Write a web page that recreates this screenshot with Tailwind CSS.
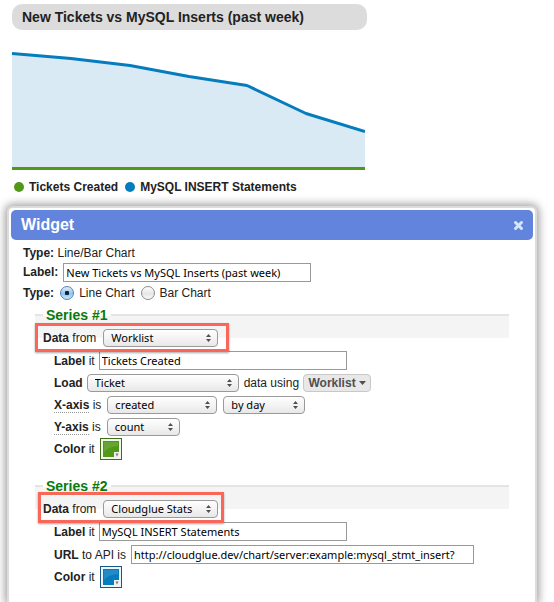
<!DOCTYPE html>
<html lang="en">
<head>
<meta charset="utf-8">
<title>Widget</title>
<script src="https://cdn.jsdelivr.net/npm/@tailwindcss/browser@4"></script>
</head>
<body class="flex min-h-screen flex-col bg-white font-['Liberation_Sans',Arial,sans-serif] text-xs text-[#222]">
<svg class="hidden">
  <symbol id="updown" viewBox="0 0 5 8"><path d="M2.5 0L5 3H0zM2.5 8L0 5H5z" fill="#505050"/></symbol>
</svg>

<section class="mx-3 mt-1">
  <h1 class="w-full max-w-[355px] rounded-[10px] bg-[#dcdcdc] px-2.5 text-sm leading-[26px] font-bold">New Tickets vs MySQL Inserts (past week)</h1>
  <svg class="mt-[14px] block h-[126px] w-full max-w-[353px]" viewBox="0 0 353 126" preserveAspectRatio="none" role="img" aria-label="Line chart">
    <path d="M0 9.5L59 14.5L118 21.5L177 32.5L235 41.5L294 69.5L353 87.5V126H0z" fill="#d9eaf4"/>
    <path d="M0 9.5L59 14.5L118 21.5L177 32.5L235 41.5L294 69.5L353 87.5" fill="none" stroke="#057cbe" stroke-width="3" stroke-linejoin="round"/>
    <rect y="123" width="353" height="3" fill="#519818"/>
  </svg>
  <ul class="mt-2 flex h-[18px] items-center gap-[7px] pl-0.5 font-bold">
    <li class="flex items-center gap-[5px]"><span class="size-2.5 rounded-full bg-[#519818]"></span>Tickets Created</li>
    <li class="flex items-center gap-[5px]"><span class="size-2.5 rounded-full bg-[#057cbe]"></span>MySQL INSERT Statements</li>
  </ul>
</section>

<main class="mt-2.5 mr-[17px] ml-[7px] grow rounded-t-md border-2 border-b-0 border-[#dcdcdc] bg-white p-0.5 pb-3 shadow-[0_0_8px_2px_rgba(0,0,0,0.38)]">
  <header class="flex h-[30px] items-center justify-between rounded-[5px] bg-[#6284dd] pr-[9px] pl-2.5">
    <h2 class="text-base leading-5 font-bold text-white">Widget</h2>
    <button type="button" aria-label="Close" class="block size-[11px]">
      <svg class="size-full" viewBox="0 0 11 11"><path d="M2.5 2.5L8.5 8.5M8.5 2.5L2.5 8.5" stroke="#d3e8fb" stroke-width="3" stroke-linecap="round"/></svg>
    </button>
  </header>

  <form class="pt-1">
    <div class="px-3">
      <p class="h-[18px] leading-[18px]"><b>Type:</b> Line/Bar Chart</p>
      <div class="flex h-5 items-center gap-[5px]">
        <label for="name" class="font-bold">Label:</label>
        <input id="name" type="text" value="New Tickets vs MySQL Inserts (past week)" class="h-[19px] w-[248px] border border-[#999] bg-white px-0.5 font-['Noto_Sans',sans-serif] text-[11px] text-black">
      </div>
      <div class="flex h-[22px] items-center gap-1.5">
        <b>Type:</b>
        <label class="flex items-center gap-[5px]"><input type="radio" name="kind" checked class="size-[14px] appearance-none rounded-full border border-[#5a7fae] bg-[radial-gradient(circle,#10233c_2px,transparent_2.5px),linear-gradient(#e3effb,#8fc3ef_55%,#c4ecff)]">Line Chart</label>
        <label class="flex items-center gap-[5px]"><input type="radio" name="kind" class="size-[14px] appearance-none rounded-full border border-[#8c8c8c] bg-[linear-gradient(#fff,#e6e6e6_55%,#fafafa)]">Bar Chart</label>
      </div>
    </div>

    <fieldset class="mx-6 mt-0.5 border-t-2 border-[#e4e4e4] bg-[linear-gradient(#f4f4f4,#f5f4f6_22px,transparent_22px)] pt-[3px] pl-2">
      <legend class="h-[18px] px-[3px] text-sm leading-[18px] font-bold text-[#0a7a0a]">Series #1</legend>
      <div class="relative flex h-[22px] w-fit items-center gap-[7px]">
        <label for="src1"><b>Data</b> from</label>
        <span class="relative"><select id="src1" class="block h-[18px] w-[115px] appearance-none rounded border border-[#9a9a9a] bg-linear-to-b from-white to-[#e8e8e8] pl-[7px] font-['Noto_Sans',sans-serif] text-[11px] leading-4 text-black"><option>Worklist</option></select><svg class="pointer-events-none absolute top-[5px] right-[7px] h-2 w-[5px]"><use href="#updown"/></svg></span>
        <span class="pointer-events-none absolute -top-1 -right-[11px] -bottom-[3px] -left-2 border-3 border-[#fa6657] shadow-[0_1px_2px_rgba(0,0,0,0.35)]"></span>
      </div>
      <div class="pl-[11px]">
        <div class="flex h-[23px] items-center gap-1">
          <label for="label1"><b>Label</b> it</label>
          <input id="label1" type="text" value="Tickets Created" class="h-[19px] w-[248px] border border-[#999] bg-white px-0.5 font-['Noto_Sans',sans-serif] text-[11px] text-black">
        </div>
        <div class="flex h-[22px] items-center gap-1">
          <label for="load" class="font-bold">Load</label>
          <span class="relative"><select id="load" class="block h-[18px] w-[152px] appearance-none rounded border border-[#9a9a9a] bg-linear-to-b from-white to-[#e8e8e8] pl-[7px] font-['Noto_Sans',sans-serif] text-[11px] leading-4 text-black"><option>Ticket</option></select><svg class="pointer-events-none absolute top-[5px] right-[7px] h-2 w-[5px]"><use href="#updown"/></svg></span>
          <span class="pl-px">data using</span>
          <button type="button" class="flex h-[18px] w-[68px] items-center justify-center gap-[3px] rounded border border-[#c8c8c8] bg-[#e8e8e8] font-bold text-[#505050]">Worklist<svg class="h-1 w-[7px]" viewBox="0 0 7 4"><path d="M0 0H7L3.5 4z" fill="#505050"/></svg></button>
        </div>
        <div class="flex h-[22px] items-center gap-1.5">
          <label for="xaxis"><b class="border-b border-dotted border-[#999]">X-axis</b> is</label>
          <span class="relative"><select id="xaxis" class="block h-[18px] w-[110px] appearance-none rounded border border-[#9a9a9a] bg-linear-to-b from-white to-[#e8e8e8] pl-[7px] font-['Noto_Sans',sans-serif] text-[11px] leading-4 text-black"><option>created</option></select><svg class="pointer-events-none absolute top-[5px] right-[7px] h-2 w-[5px]"><use href="#updown"/></svg></span>
          <span class="relative"><select aria-label="Interval" class="block h-[18px] w-[82px] appearance-none rounded border border-[#9a9a9a] bg-linear-to-b from-white to-[#e8e8e8] pl-[7px] font-['Noto_Sans',sans-serif] text-[11px] leading-4 text-black"><option>by day</option></select><svg class="pointer-events-none absolute top-[5px] right-[7px] h-2 w-[5px]"><use href="#updown"/></svg></span>
        </div>
        <div class="flex h-[22px] items-center gap-1.5">
          <label for="yaxis"><b class="border-b border-dotted border-[#999]">Y-axis</b> is</label>
          <span class="relative"><select id="yaxis" class="block h-[18px] w-[73px] appearance-none rounded border border-[#9a9a9a] bg-linear-to-b from-white to-[#e8e8e8] pl-[7px] font-['Noto_Sans',sans-serif] text-[11px] leading-4 text-black"><option>count</option></select><svg class="pointer-events-none absolute top-[5px] right-[7px] h-2 w-[5px]"><use href="#updown"/></svg></span>
        </div>
        <div class="flex h-[22px] items-center gap-[5px]">
          <label for="color1"><b>Color</b> it</label>
          <button id="color1" type="button" aria-label="Green" class="size-[22px] border border-[#3c6e14] bg-[#f2f7ee] p-0.5"><svg class="size-4" viewBox="0 0 16 16"><path d="M0 0H16V16H0z" fill="#519818"/><path d="M1 1H15V5Q5 6 1 11z" fill="#fff" opacity=".12"/><path d="M11 11H16V16H11z" fill="#f0f0f0"/><path d="M12.5 12.5H15.5L14 15.5z" fill="#777"/></svg></button>
        </div>
      </div>
    </fieldset>

    <fieldset class="mx-6 mt-[17px] border-t-2 border-[#e4e4e4] bg-[linear-gradient(#f4f4f4,#f5f4f6_22px,transparent_22px)] pt-[3px] pl-2">
      <legend class="h-[18px] px-[3px] text-sm leading-[18px] font-bold text-[#0a7a0a]">Series #2</legend>
      <div class="relative flex h-[22px] w-fit items-center gap-[7px]">
        <label for="src2"><b>Data</b> from</label>
        <span class="relative"><select id="src2" class="block h-[18px] w-[115px] appearance-none rounded border border-[#9a9a9a] bg-linear-to-b from-white to-[#e8e8e8] pl-[7px] font-['Noto_Sans',sans-serif] text-[11px] leading-4 text-black"><option>Cloudglue Stats</option></select><svg class="pointer-events-none absolute top-[5px] right-[7px] h-2 w-[5px]"><use href="#updown"/></svg></span>
        <span class="pointer-events-none absolute -top-1.5 -right-1.5 -bottom-[3px] -left-[5px] border-3 border-[#fa6657] shadow-[0_1px_2px_rgba(0,0,0,0.35)]"></span>
      </div>
      <div class="pl-[11px]">
        <div class="flex h-[23px] items-center gap-1">
          <label for="label2"><b>Label</b> it</label>
          <input id="label2" type="text" value="MySQL INSERT Statements" class="h-[19px] w-[248px] border border-[#999] bg-white px-0.5 font-['Noto_Sans',sans-serif] text-[11px] text-black">
        </div>
        <div class="flex h-[23px] items-center gap-[5px]">
          <label for="url"><b>URL</b> to API is</label>
          <input id="url" type="text" value="http://cloudglue.dev/chart/server:example:mysql_stmt_insert?" class="h-[19px] w-[343px] border border-[#999] bg-white px-0.5 font-['Noto_Sans',sans-serif] text-[11px] text-black">
        </div>
        <div class="flex h-[22px] items-center gap-[5px]">
          <label for="color2"><b>Color</b> it</label>
          <button id="color2" type="button" aria-label="Blue" class="size-[22px] border border-[#17588a] bg-[#eef5fa] p-0.5"><svg class="size-4" viewBox="0 0 16 16"><path d="M0 0H16V16H0z" fill="#057cbe"/><path d="M1 1H15V5Q5 6 1 11z" fill="#fff" opacity=".12"/><path d="M11 11H16V16H11z" fill="#f0f0f0"/><path d="M12.5 12.5H15.5L14 15.5z" fill="#777"/></svg></button>
        </div>
      </div>
    </fieldset>
  </form>
</main>
</body>
</html>
